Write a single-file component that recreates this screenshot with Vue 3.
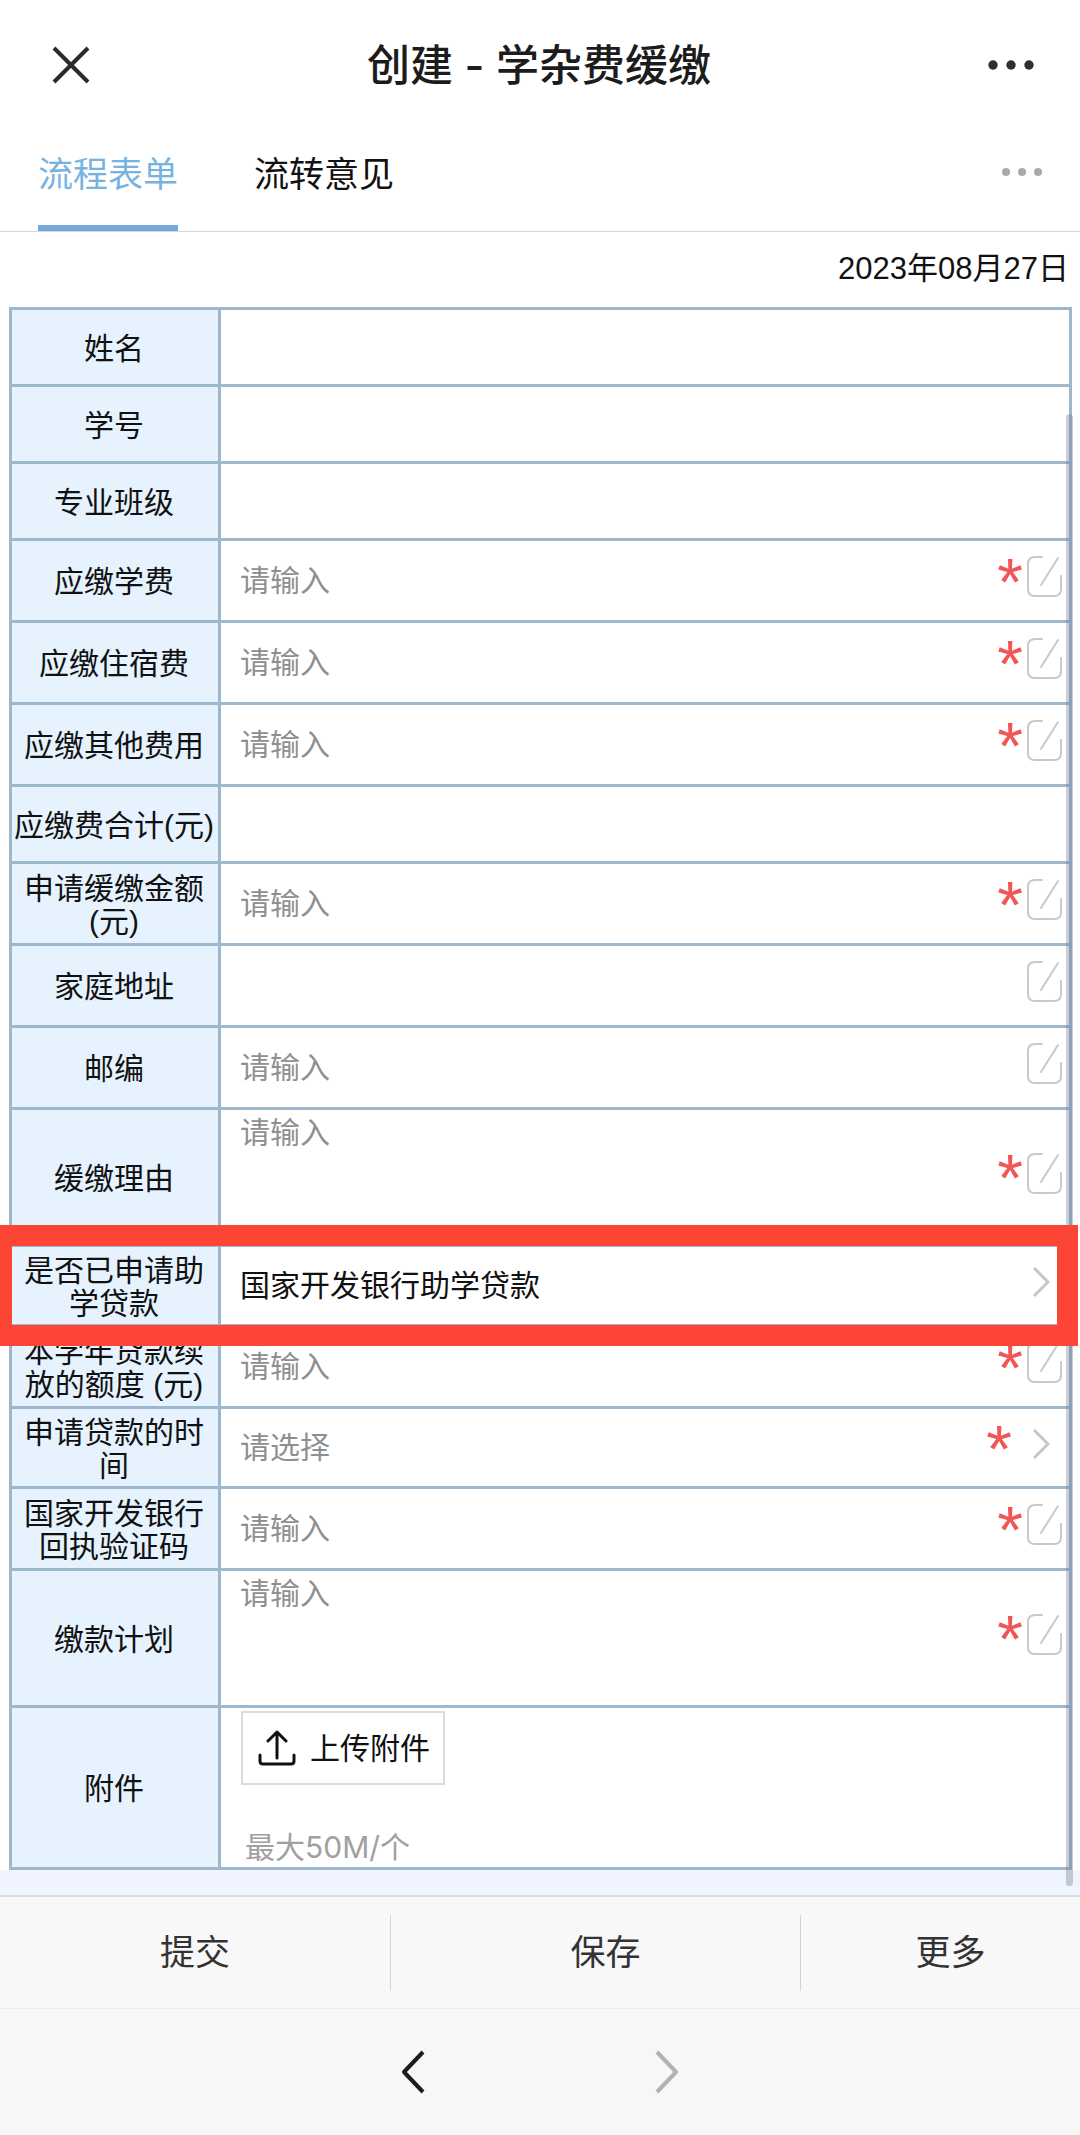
<script setup>
import { ref } from 'vue'

const rows = ref([
  { id: 'name', label: '姓名', type: 'readonly' },
  { id: 'student-no', label: '学号', type: 'readonly' },
  { id: 'class', label: '专业班级', type: 'readonly' },
  { id: 'tuition', label: '应缴学费', type: 'input', hint: '请输入', required: true, value: '' },
  { id: 'dorm', label: '应缴住宿费', type: 'input', hint: '请输入', required: true, value: '' },
  { id: 'other', label: '应缴其他费用', type: 'input', hint: '请输入', required: true, value: '' },
  { id: 'total', label: '应缴费合计(元)', type: 'readonly' },
  { id: 'defer', label: '申请缓缴金额(元)', type: 'input', hint: '请输入', required: true, value: '' },
  { id: 'address', label: '家庭地址', type: 'input', hint: '', value: '' },
  { id: 'postcode', label: '邮编', type: 'input', hint: '请输入', value: '' },
  { id: 'reason', label: '缓缴理由', type: 'textarea', hint: '请输入', required: true, value: '' },
  { id: 'loan', label: '是否已申请助学贷款', type: 'select', options: ['国家开发银行助学贷款'], value: '国家开发银行助学贷款', marked: true },
  { id: 'loan-amount', label: '本学年贷款续放的额度 (元)', type: 'input', hint: '请输入', required: true, value: '' },
  { id: 'loan-time', label: '申请贷款的时间', type: 'select', hint: '请选择', options: [], required: true, value: '' },
  { id: 'receipt', label: '国家开发银行回执验证码', type: 'input', hint: '请输入', required: true, value: '' },
  { id: 'plan', label: '缴款计划', type: 'textarea', hint: '请输入', required: true, value: '' },
  { id: 'upload', label: '附件', type: 'upload' }
])
</script>

<template>
  <div class="page">
    <header class="topbar">
      <button class="icon-btn close" aria-label="关闭">
        <svg width="38" height="38" viewBox="0 0 38 38"><path d="M2 2L36 36M36 2L2 36" stroke="#2b2b2b" stroke-width="4" /></svg>
      </button>
      <h1>创建 - 学杂费缓缴</h1>
      <button class="icon-btn more" aria-label="更多选项">
        <svg width="46" height="10" viewBox="0 0 46 10" fill="#2f2f2f"><circle cx="5" cy="5" r="4.7" /><circle cx="23" cy="5" r="4.7" /><circle cx="41" cy="5" r="4.7" /></svg>
      </button>
    </header>

    <nav class="tabs">
      <a href="#form" class="tab active">流程表单</a>
      <a href="#opinions" class="tab">流转意见</a>
      <button class="icon-btn tab-more" aria-label="更多标签">
        <svg width="40" height="8" viewBox="0 0 40 8" fill="#a9a9a9"><circle cx="4" cy="4" r="4" /><circle cx="20" cy="4" r="4" /><circle cx="36" cy="4" r="4" /></svg>
      </button>
    </nav>

    <main class="body">
      <p class="date">2023年08月27日</p>
      <div class="sheet">
        <table>
          <colgroup><col class="col-label" /><col /></colgroup>
          <tbody>
            <tr v-for="row in rows" :key="row.id" :class="[row.type, { marked: row.marked }]">
              <th scope="row">
                <label v-if="row.type !== 'readonly'" :for="row.id">{{ row.label }}</label>
                <template v-else>{{ row.label }}</template>
              </th>
              <td>
                <div v-if="row.type === 'upload'" class="attach">
                  <button :id="row.id" class="upload-btn">
                    <svg width="38" height="36" viewBox="0 0 38 36" fill="none" stroke="#111" stroke-width="3" stroke-linecap="round" stroke-linejoin="round"><path d="M19 28V2M10 11L19 2L28 11M2 25V31Q2 34 5 34H33Q36 34 36 31V25" /></svg>
                    <span>上传附件</span>
                  </button>
                  <p class="limit">最大50M/个</p>
                </div>
                <div v-else-if="row.type !== 'readonly'" class="field">
                  <textarea v-if="row.type === 'textarea'" :id="row.id" v-model="row.value" :placeholder="row.hint"></textarea>
                  <select v-else-if="row.type === 'select'" :id="row.id" v-model="row.value" :class="{ empty: !row.value }">
                    <option v-if="row.hint" value="">{{ row.hint }}</option>
                    <option v-for="o in row.options" :key="o">{{ o }}</option>
                  </select>
                  <input v-else :id="row.id" v-model="row.value" type="text" :placeholder="row.hint" />
                  <span v-if="row.required" class="star">*</span>
                  <svg v-if="row.type === 'select'" class="chevron" width="18" height="30" viewBox="0 0 18 30" fill="none" stroke="#c6c6c6" stroke-width="3"><path d="M2 1L16 15L2 29" /></svg>
                  <svg v-else class="edit" width="35" height="41" viewBox="0 0 35 41" fill="none" stroke="#c9c9c9" stroke-width="2" stroke-linecap="round"><path d="M15 1H8Q1 1 1 8V33Q1 40 8 40H27Q34 40 34 33V20M31 2L14 29" /></svg>
                </div>
              </td>
            </tr>
          </tbody>
        </table>
      </div>
      <div class="tail"></div>
      <div class="scrollbar"></div>
    </main>

    <div class="actions">
      <button>提交</button>
      <button>保存</button>
      <button>更多</button>
    </div>

    <nav class="history">
      <button class="icon-btn" aria-label="后退">
        <svg width="24" height="44" viewBox="0 0 24 44" fill="none" stroke="#1c1c1c" stroke-width="4" stroke-linejoin="round"><path d="M22 2L3 22L22 42" /></svg>
      </button>
      <button class="icon-btn" aria-label="前进">
        <svg width="24" height="44" viewBox="0 0 24 44" fill="none" stroke="#b2b2b2" stroke-width="4" stroke-linejoin="round"><path d="M2 2L21 22L2 42" /></svg>
      </button>
    </nav>
  </div>
</template>

<style>
body {
  margin: 0;
  background: #f7f7f7;
}
</style>

<style scoped>
.page {
  background: #fff;
  color: #111;
  font-family: "Liberation Sans", "Noto Sans CJK SC", sans-serif;
  font-size: 30px;
  line-height: 33px;
  overflow: hidden;
}
button,
input,
textarea,
select {
  margin: 0;
  padding: 0;
  border: 0;
  outline: 0;
  background: none;
  color: inherit;
  font: inherit;
}
svg {
  display: block;
  flex: none;
}
.topbar {
  display: flex;
  align-items: center;
  justify-content: space-between;
  height: 130px;
  padding: 0 46px 0 52px;
}
h1 {
  margin: 0;
  font-family: Inter, "Noto Sans CJK SC", sans-serif;
  font-size: 43px;
  line-height: 60px;
  font-weight: 500;
  color: #1c1c1c;
}
.tabs {
  display: flex;
  gap: 76px;
  height: 101px;
  padding: 0 38px;
  border-bottom: 1px solid #d6d6d6;
}
.tab {
  box-sizing: border-box;
  height: 101px;
  border-bottom: 6px solid transparent;
  font-size: 35px;
  line-height: 90px;
  color: #111;
  text-decoration: none;
}
.tab.active {
  border-color: #73a9d9;
  color: #77b3e0;
}
.tab-more {
  height: 84px;
  margin-left: auto;
}
.body {
  position: relative;
}
.date {
  margin: 0;
  padding: 0 11px 1px;
  font-size: 31px;
  line-height: 74px;
  text-align: right;
}
.sheet {
  padding: 0 8px 0 9px;
}
table {
  width: 100%;
  border-collapse: collapse;
  table-layout: fixed;
}
.col-label {
  width: 209px;
}
th,
td {
  padding: 0;
  border: 3px solid #9db8cd;
}
th {
  padding: 2px 2px 0 0;
  background: #e6f2fd;
  font-weight: 400;
  text-align: center;
}
.readonly {
  height: 77px;
}
.input {
  height: 82px;
}
.textarea {
  height: 137px;
}
.select {
  height: 80px;
}
.upload {
  height: 162px;
}
.field {
  display: flex;
  align-items: center;
  padding: 0 7px 0 19px;
}
.field input,
.field select,
.field textarea {
  flex: 1;
  min-width: 0;
  height: 74px;
}
.field textarea {
  box-sizing: border-box;
  height: 134px;
  padding-top: 6px;
  resize: none;
}
.field select {
  appearance: none;
}
.field select.empty,
.field ::placeholder {
  color: #8f8f8f;
  opacity: 1;
}
.star {
  height: 54px;
  margin: 0 4px 10px 0;
  font-size: 66px;
  line-height: 66px;
  color: #f25555;
}
.edit,
.chevron {
  margin-bottom: 8px;
}
.chevron {
  margin-left: 16px;
  margin-right: 12px;
}
.attach {
  display: flex;
  flex-direction: column;
  align-items: flex-start;
  gap: 46px;
  padding-left: 20px;
}
.upload-btn {
  display: flex;
  align-items: center;
  gap: 14px;
  height: 74px;
  padding: 0 13px 0 15px;
  border: 2px solid #dcdcdc;
}
.limit {
  margin: 0 4px;
  font-family: Inter, "Noto Sans CJK SC", sans-serif;
  color: #a0a0a0;
}
.marked {
  position: relative;
}
.marked td::after {
  content: "";
  position: absolute;
  inset: -21px -7px -20px -20px;
  border: 21px solid #fd4536;
  z-index: 1;
  pointer-events: none;
}
.tail {
  height: 25px;
  background: #f0f4ff;
}
.scrollbar {
  position: absolute;
  top: 182px;
  right: 7px;
  bottom: 9px;
  width: 7px;
  border-radius: 4px;
  background: rgba(110, 115, 140, 0.35);
}
.actions {
  display: grid;
  grid-template-columns: 390fr 410fr 280fr;
  align-items: center;
  height: 111px;
  border-top: 2px solid #dcdcdc;
  background: #f8f8f8;
}
.actions button {
  height: 76px;
  font-size: 35px;
  color: #333;
}
.actions button + button {
  padding-left: 20px;
  border-left: 1px solid #d4d4d4;
}
.history {
  display: flex;
  align-items: center;
  justify-content: center;
  gap: 230px;
  height: 126px;
  border-top: 1px solid #eeeeee;
  background: #f7f7f7;
}
</style>
